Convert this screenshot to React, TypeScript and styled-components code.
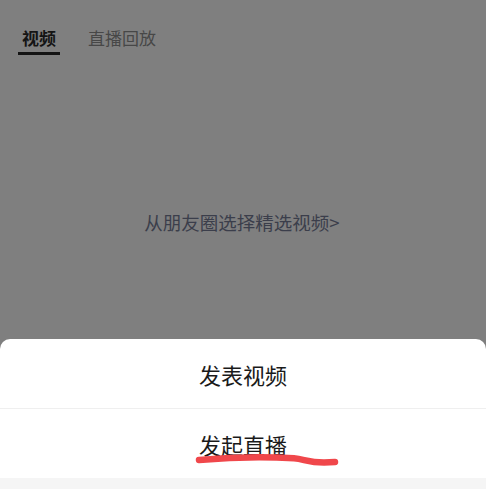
import styled, { createGlobalStyle } from 'styled-components';

const GlobalStyle = createGlobalStyle`
  html, body {
    margin: 0;
    padding: 0;
    background: #7f7f7f;
  }
  body {
    font-family: "Noto Sans CJK SC", "Noto Sans", sans-serif;
  }
`;

export default function App() {
  return (
    <>
      <GlobalStyle />
      <Page>
        <Tabs>
          <Tab $active>视频</Tab>
          <Tab>直播回放</Tab>
        </Tabs>

        <Body>
          <PickLink>从朋友圈选择精选视频&gt;</PickLink>
        </Body>

        <Sheet>
          <SheetItem>
            <ItemLabel>发表视频</ItemLabel>
          </SheetItem>
          <Divider />
          <SheetItem>
            <ItemLabel>
              发起直播
              <Scribble viewBox="0 0 142 12" aria-hidden>
                <path
                  d="M3 5 C 30 2.5, 70 1.5, 98 3.2 C 108 4, 112 7.5, 128 7.6 L 139 7"
                  fill="none"
                  stroke="#f0474b"
                  strokeWidth="6.5"
                  strokeLinecap="round"
                  strokeLinejoin="round"
                />
              </Scribble>
            </ItemLabel>
          </SheetItem>
          <SheetFooter />
        </Sheet>
      </Page>
    </>
  );
}

const Page = styled.div`
  width: 486px;
  height: 489px;
  display: flex;
  flex-direction: column;
  background: #7f7f7f;
  overflow: hidden;
`;

const Tabs = styled.div`
  height: 56px;
  box-sizing: border-box;
  padding: 27px 0 0 18px;
  display: flex;
  gap: 24px;
  align-items: flex-start;
`;

const Tab = styled.div<{ $active?: boolean }>`
  padding: 0 4px;
  font-size: 17px;
  line-height: 22px;
  font-weight: ${({ $active }) => ($active ? 700 : 400)};
  color: ${({ $active }) => ($active ? '#141414' : '#474747')};
  display: flex;
  flex-direction: column;
  align-items: stretch;
  &::after {
    content: '';
    margin: 3px -4px 0;
    height: 3px;
    background: ${({ $active }) => ($active ? '#141414' : 'transparent')};
  }
`;

const Body = styled.div`
  flex: 1;
  display: flex;
  justify-content: center;
  align-items: flex-start;
  padding-top: 153px;
`;

const PickLink = styled.div`
  font-size: 18.5px;
  line-height: 26px;
  color: #3b3e4b;
  margin-left: -2px;
`;

const Sheet = styled.div`
  height: 150px;
  flex-shrink: 0;
  background: #ffffff;
  border-radius: 10px 10px 0 0;
  display: flex;
  flex-direction: column;
  overflow: hidden;
`;

const SheetItem = styled.div`
  height: 69px;
  display: flex;
  align-items: center;
  justify-content: center;
`;

const ItemLabel = styled.span`
  position: relative;
  font-size: 22px;
  line-height: 26px;
  color: #1a1a1a;
`;

const Scribble = styled.svg`
  position: absolute;
  left: -3px;
  top: calc(100% - 2px);
  width: 142px;
  height: 12px;
  overflow: visible;
`;

const Divider = styled.div`
  height: 1px;
  background: #efefef;
`;

const SheetFooter = styled.div`
  flex: 1;
  background: #f5f5f5;
`;
